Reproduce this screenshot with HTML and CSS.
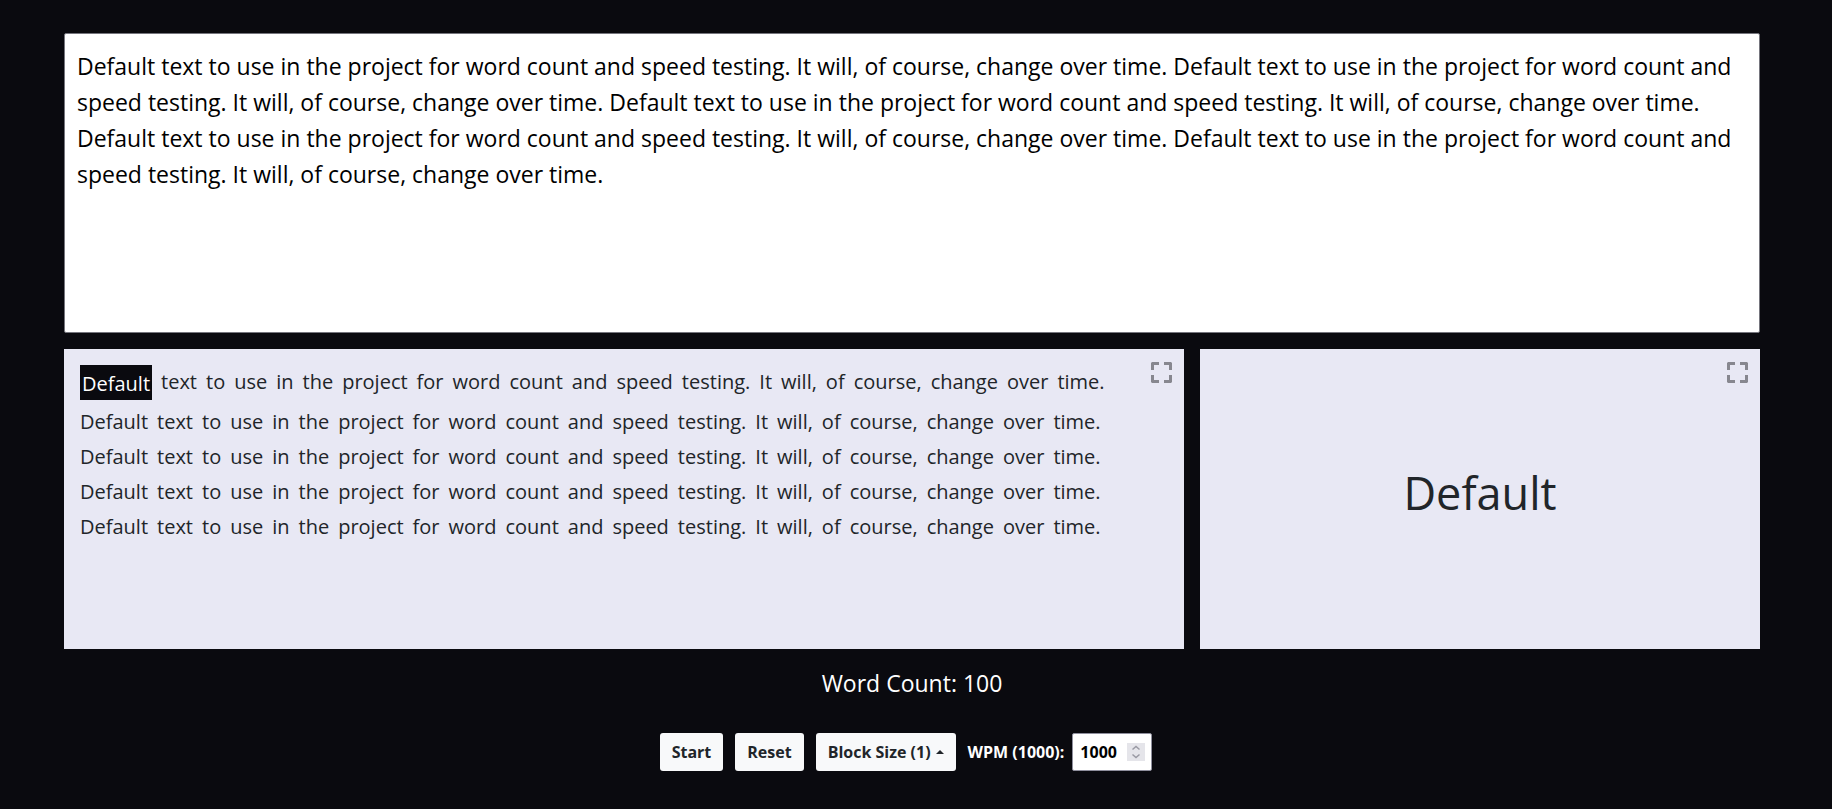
FILE: index.html
```
<!DOCTYPE html>
<html lang="en">
<head>
<meta charset="utf-8">
<meta name="viewport" content="width=device-width, initial-scale=1">
<title>Speed Reader</title>
<link rel="stylesheet" href="styles.css">
</head>
<body>
<main class="app">
  <textarea class="source" aria-label="Text to read" spellcheck="false">Default text to use in the project for word count and speed testing. It will, of course, change over time. Default text to use in the project for word count and speed testing. It will, of course, change over time. Default text to use in the project for word count and speed testing. It will, of course, change over time. Default text to use in the project for word count and speed testing. It will, of course, change over time. Default text to use in the project for word count and speed testing. It will, of course, change over time.</textarea>

  <div class="panels">
    <section class="panel reader">
      <p class="line"><span class="current">Default</span><span>text</span><span>to</span><span>use</span><span>in</span><span>the</span><span>project</span><span>for</span><span>word</span><span>count</span><span>and</span><span>speed</span><span>testing.</span><span>It</span><span>will,</span><span>of</span><span>course,</span><span>change</span><span>over</span><span>time.</span></p>
      <p class="line"><span>Default</span><span>text</span><span>to</span><span>use</span><span>in</span><span>the</span><span>project</span><span>for</span><span>word</span><span>count</span><span>and</span><span>speed</span><span>testing.</span><span>It</span><span>will,</span><span>of</span><span>course,</span><span>change</span><span>over</span><span>time.</span></p>
      <p class="line"><span>Default</span><span>text</span><span>to</span><span>use</span><span>in</span><span>the</span><span>project</span><span>for</span><span>word</span><span>count</span><span>and</span><span>speed</span><span>testing.</span><span>It</span><span>will,</span><span>of</span><span>course,</span><span>change</span><span>over</span><span>time.</span></p>
      <p class="line"><span>Default</span><span>text</span><span>to</span><span>use</span><span>in</span><span>the</span><span>project</span><span>for</span><span>word</span><span>count</span><span>and</span><span>speed</span><span>testing.</span><span>It</span><span>will,</span><span>of</span><span>course,</span><span>change</span><span>over</span><span>time.</span></p>
      <p class="line"><span>Default</span><span>text</span><span>to</span><span>use</span><span>in</span><span>the</span><span>project</span><span>for</span><span>word</span><span>count</span><span>and</span><span>speed</span><span>testing.</span><span>It</span><span>will,</span><span>of</span><span>course,</span><span>change</span><span>over</span><span>time.</span></p>
      <button class="expand" type="button" aria-label="Expand text view">
        <svg viewBox="0 0 21 21" aria-hidden="true"><path d="M1 0h7v3H3v5H0V1zM13 0h7l1 1v7h-3V3h-5zM0 13h3v5h5v3H1l-1-1zM18 13h3v7l-1 1h-7v-3h5z"/></svg>
      </button>
    </section>
    <section class="panel flash">
      <p class="flash-word">Default</p>
      <button class="expand" type="button" aria-label="Expand word view">
        <svg viewBox="0 0 21 21" aria-hidden="true"><path d="M1 0h7v3H3v5H0V1zM13 0h7l1 1v7h-3V3h-5zM0 13h3v5h5v3H1l-1-1zM18 13h3v7l-1 1h-7v-3h5z"/></svg>
      </button>
    </section>
  </div>

  <p class="count">Word Count: 100</p>

  <div class="controls">
    <button class="btn" type="button">Start</button>
    <button class="btn" type="button">Reset</button>
    <button class="btn dropup" type="button" aria-haspopup="true">Block Size (1)</button>
    <div class="speed">
      <label for="wpm">WPM (1000):</label>
      <div class="number">
        <input id="wpm" type="number" value="1000">
        <svg class="spinner" viewBox="0 0 18 18" aria-hidden="true"><path d="M5.500 6.500 9 3.500l3.500 3M5.500 11.500l3.500 3 3.500-3"/></svg>
      </div>
    </div>
  </div>
</main>
</body>
</html>
```
FILE: styles.css
```
* {
  box-sizing: border-box;
}

body {
  margin: 0;
  background: #0a0a0f;
  color: #fff;
  font-family: "Open Sans", "Noto Sans", sans-serif;
  font-size: 16px;
}

p {
  margin: 0;
}

.app {
  display: flex;
  flex-direction: column;
  padding: 33px 72px 32px 64px;
}

.source {
  display: block;
  width: 100%;
  height: 300px;
  padding: 14px 12px;
  border: 1px solid #75757d;
  border-radius: 2px;
  background: #fff;
  color: #000;
  font-family: inherit;
  font-size: 23px;
  line-height: 36px;
  resize: none;
}

.panels {
  display: grid;
  grid-template-columns: 2fr 1fr;
  gap: 16px;
  margin-top: 16px;
}

.panel {
  position: relative;
  min-height: 300px;
  background: #e8e8f4;
  color: #212529;
}

.reader {
  padding: 15px 48px 15px 16px;
}

.line {
  display: flex;
  flex-wrap: wrap;
  align-items: flex-start;
  column-gap: 9px;
  font-size: 20px;
  line-height: 35px;
}

.current {
  margin: 1px 0 4px;
  padding: 3px 2px 1px;
  background: #0a0a0f;
  color: #fff;
  line-height: 31px;
}

.flash {
  display: flex;
  align-items: center;
  justify-content: center;
  padding-bottom: 12px;
}

.flash-word {
  font-size: 45px;
  line-height: 72px;
}

.expand {
  position: absolute;
  top: 13px;
  right: 12px;
  padding: 0;
  border: 0;
  background: none;
}

.expand svg {
  display: block;
  width: 21px;
  height: 21px;
  fill: #87878f;
}

.count {
  margin-top: 16px;
  font-size: 23px;
  line-height: 36px;
  text-align: center;
}

.controls {
  display: flex;
  align-items: center;
  justify-content: center;
  gap: 12px;
  margin-top: 32px;
  padding-right: 12px;
  font-weight: 700;
}

.btn {
  display: flex;
  align-items: center;
  height: 38px;
  padding: 0 12px;
  border: 0;
  border-radius: 3px;
  background: #f8f9fa;
  color: #212529;
  font: inherit;
}

.dropup::after {
  content: "";
  margin-left: 5px;
  border: 4px solid transparent;
  border-top: 0;
  border-bottom-color: #212529;
}

.speed {
  display: flex;
  align-items: center;
  gap: 8px;
}

.number {
  position: relative;
}

.number input {
  display: block;
  width: 80px;
  height: 38px;
  padding: 0 28px 0 7px;
  border: 1px solid #8f8f9d;
  border-radius: 2px;
  background: #fff;
  color: #000;
  font: inherit;
  appearance: textfield;
}

.number input::-webkit-inner-spin-button {
  appearance: none;
  margin: 0;
}

.spinner {
  position: absolute;
  top: 10px;
  right: 7px;
  width: 18px;
  height: 18px;
  background: #e5e5ea;
  fill: none;
  stroke: #9a9aa3;
  stroke-width: 1.500;
  pointer-events: none;
}
```
